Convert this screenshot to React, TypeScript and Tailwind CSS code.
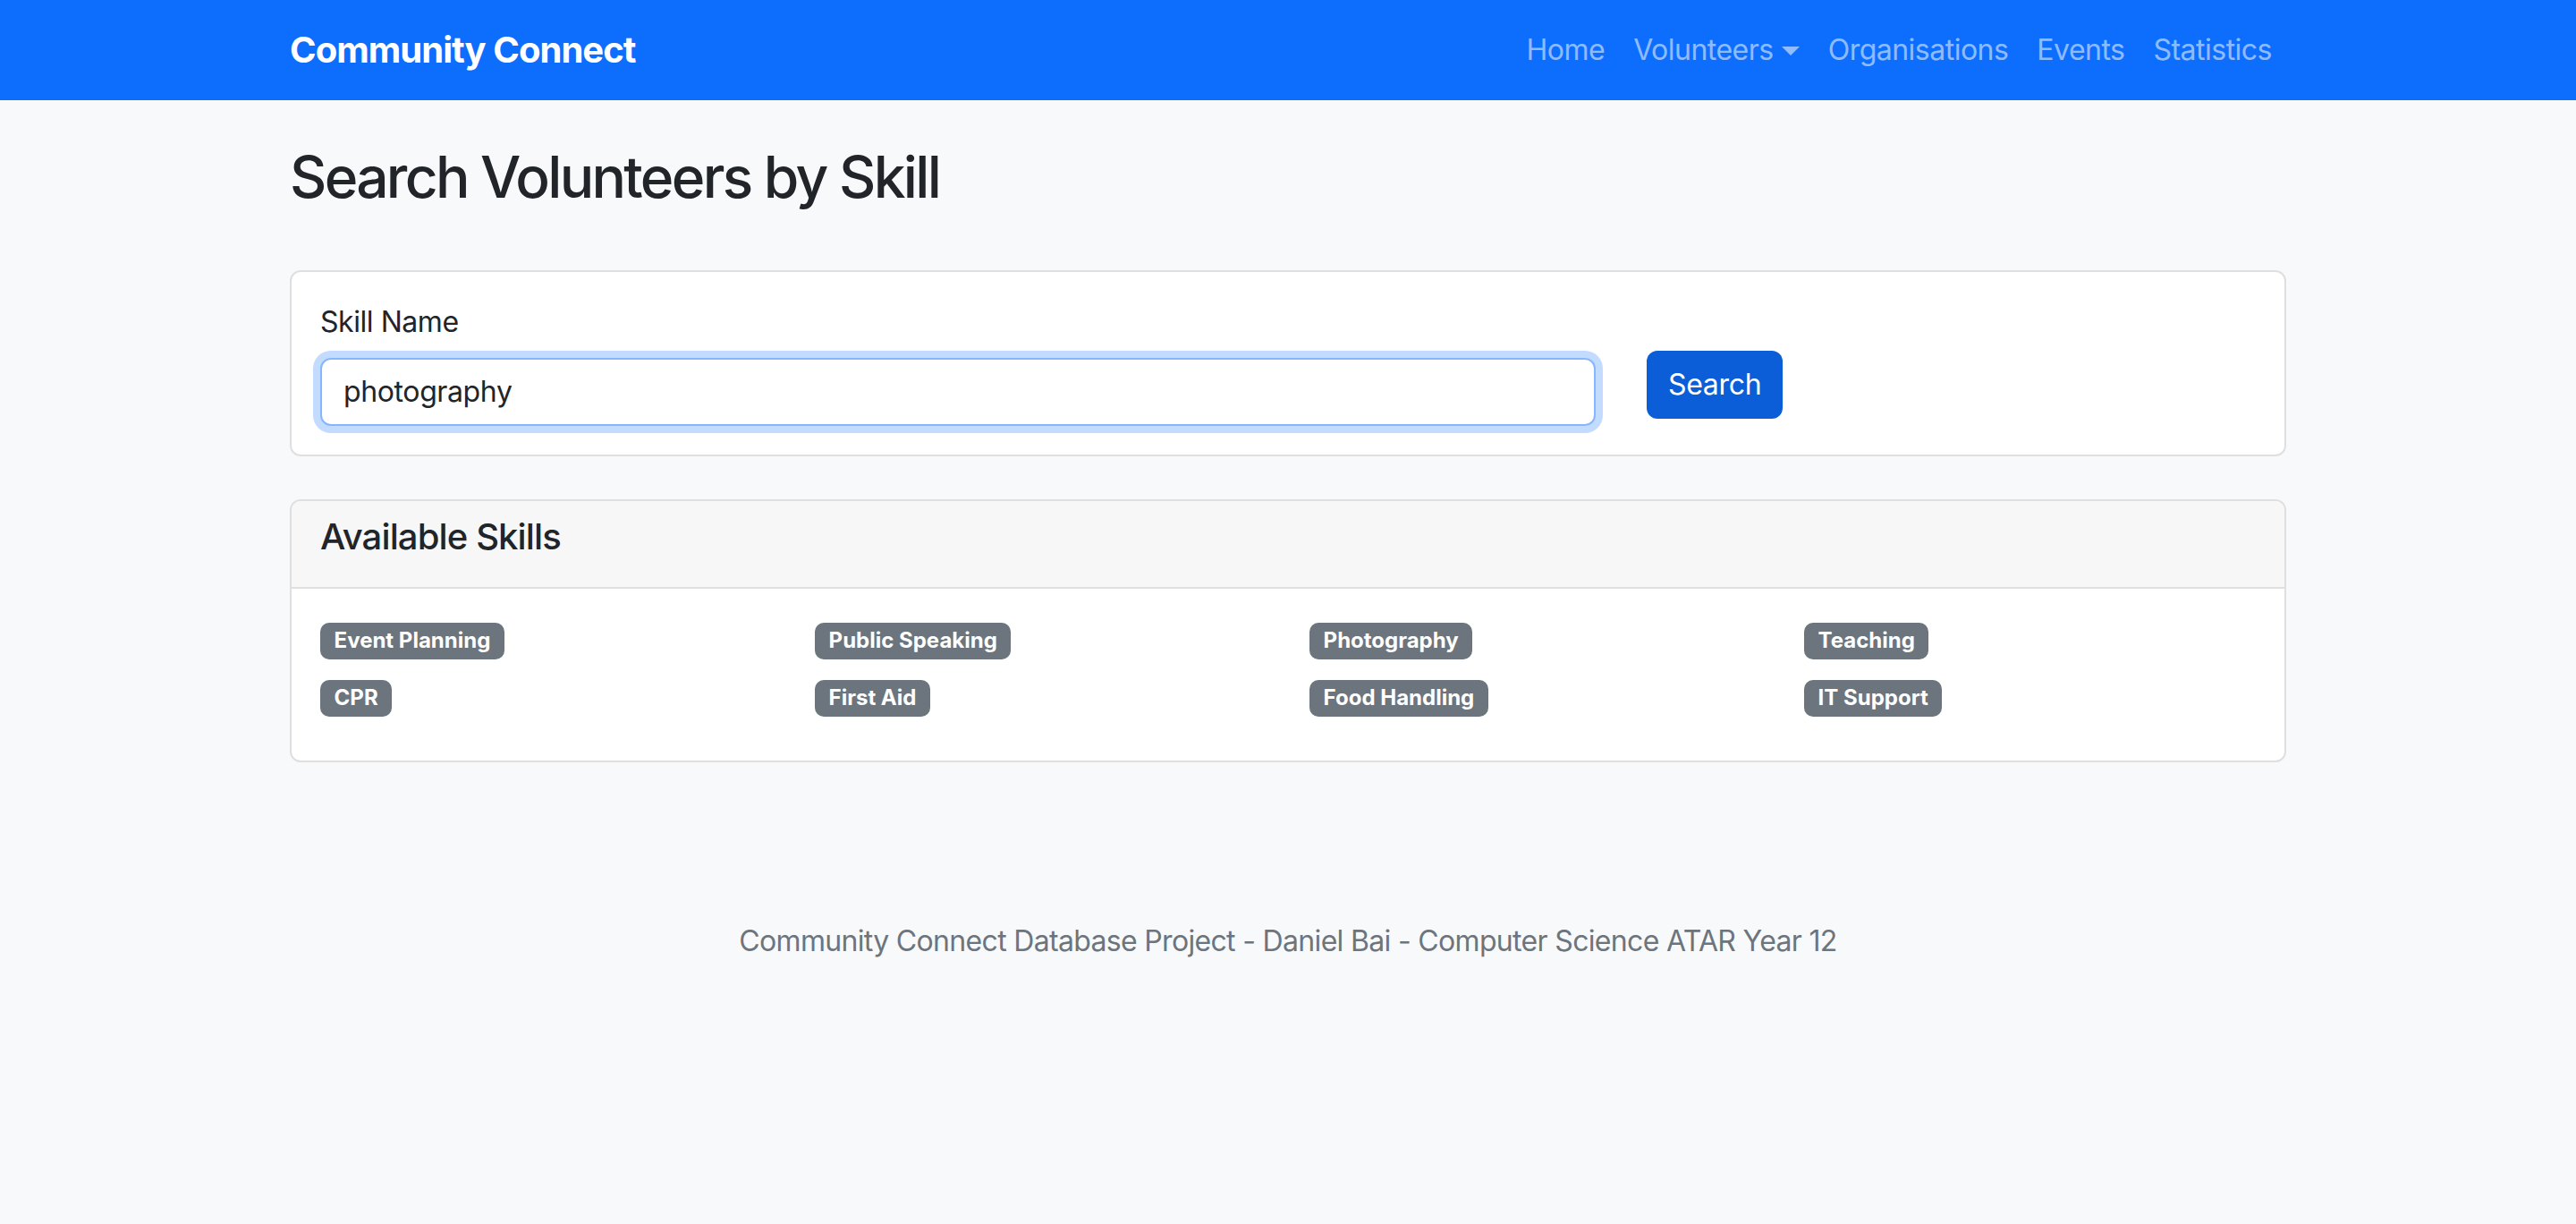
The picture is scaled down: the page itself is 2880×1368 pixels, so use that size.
const navLinks = ['Home', 'Volunteers', 'Organisations', 'Events', 'Statistics'];

const skills = [
  'Event Planning',
  'Public Speaking',
  'Photography',
  'Teaching',
  'CPR',
  'First Aid',
  'Food Handling',
  'IT Support',
];

const NavBar = () => {
  return (
    <nav className="h-[112px] bg-[#0d6efd]">
      <div className="w-[2280px] mx-auto px-[24px] h-full flex items-center justify-between">
        <div className="text-[40px] leading-[60px] font-bold text-white tracking-[-0.024em]">Community Connect</div>
        <div className="flex items-center">
          {navLinks.map((link) => (
            <div
              key={link}
              className="flex items-center px-[16px] text-[32px] leading-[48px] tracking-[-0.016em] text-[rgba(255,255,255,0.55)]"
            >
              {link}
              {link === 'Volunteers' && (
                <span className="ml-[9px] mt-[2px] w-0 h-0 border-t-[10px] border-t-[rgba(255,255,255,0.55)] border-x-[10px] border-x-transparent"></span>
              )}
            </div>
          ))}
        </div>
      </div>
    </nav>
  );
};

const SearchCard = () => {
  return (
    <div className="bg-white border-2 border-[#dfdfdf] rounded-[12px] p-[32px]">
      <div className="flex items-end gap-[57px]">
        <div className="w-[1426px]">
          <div className="text-[32px] leading-[48px] mb-[16px] text-[#212529] tracking-[-0.014em]">Skill Name</div>
          <div className="h-[76px] border-2 border-[#86b7fe] rounded-[12px] px-[24px] flex items-center text-[32px] text-[#212529] tracking-[-0.012em] bg-white shadow-[0_0_0_8px_rgba(13,110,253,0.25)]">
            photography
          </div>
        </div>
        <div className="mb-[8px] h-[76px] px-[24px] flex items-center rounded-[12px] bg-[#0b5ed7] text-white text-[32px] tracking-[-0.01em]">
          Search
        </div>
      </div>
    </div>
  );
};

const SkillsCard = () => {
  return (
    <div className="bg-white border-2 border-[#dfdfdf] rounded-[12px] overflow-hidden">
      <div className="bg-[#f7f7f7] border-b-2 border-[#dfdfdf] px-[32px] pt-[16px] pb-[32px]">
        <h5 className="text-[40px] leading-[48px] font-medium text-[#212529] tracking-[-0.022em]">Available Skills</h5>
      </div>
      <div className="p-[32px] grid grid-cols-4 gap-x-[48px]">
        {skills.map((skill) => (
          <div key={skill} className="h-[48px] mb-[16px] pt-[5px] flex items-center">
            <span className="px-[15.6px] py-[8.4px] rounded-[10px] bg-[#6c757d] text-white text-[24px] leading-none font-bold">
              {skill}
            </span>
          </div>
        ))}
      </div>
    </div>
  );
};

export default function App() {
  return (
    <div className="min-h-screen bg-[#f8f9fa] font-['Inter',sans-serif]">
      <NavBar />
      <div className="w-[2280px] mx-auto px-[24px] pt-[48px]">
        <h2 className="text-[64px] leading-[1.2] font-medium text-[#212529] tracking-[-0.042em] mb-[65px]">
          Search Volunteers by Skill
        </h2>
        <SearchCard />
        <div className="h-[48px]"></div>
        <SkillsCard />
      </div>
      <footer className="mt-[176px] text-center text-[32px] leading-[48px] text-[#6c757d] tracking-[-0.021em]">
        Community Connect Database Project - Daniel Bai - Computer Science ATAR Year 12
      </footer>
    </div>
  );
}
